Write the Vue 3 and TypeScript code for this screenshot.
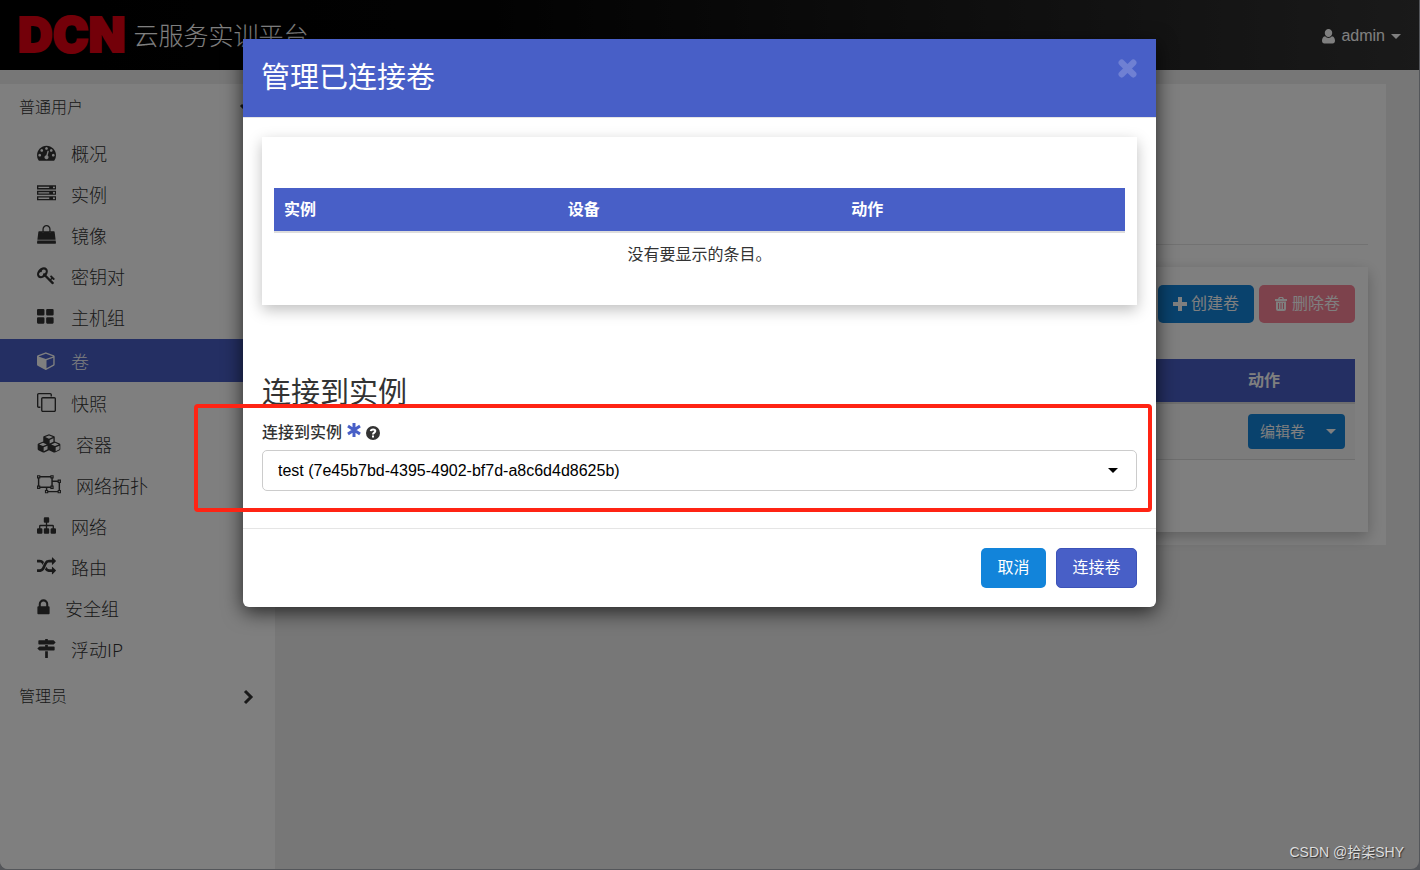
<script setup lang="ts">
import { ref } from 'vue'

interface NavItem {
  label: string
  width: number
  path: string
  active?: boolean
}

const navItems: NavItem[] = [
  {
    label: '概况',
    width: 1792,
    path: 'M384 1152q0-53-37.5-90.5t-90.5-37.5-90.5 37.5-37.5 90.5 37.5 90.5 90.5 37.5 90.5-37.5 37.5-90.5zm192-448q0-53-37.5-90.5t-90.5-37.5-90.5 37.5-37.5 90.5 37.5 90.5 90.5 37.5 90.5-37.5 37.5-90.5zm428 481l101-382q6-26-7.5-48.5t-38.5-29.5-48 6.5-30 39.5l-101 382q-60 5-107 43.5t-63 98.5q-20 77 20 146t117 89 146-20 89-117q16-60-6-117t-72-91zm660-33q0-53-37.5-90.5t-90.5-37.5-90.5 37.5-37.5 90.5 37.5 90.5 90.5 37.5 90.5-37.5 37.5-90.5zm-640-640q0-53-37.5-90.5t-90.5-37.5-90.5 37.5-37.5 90.5 37.5 90.5 90.5 37.5 90.5-37.5 37.5-90.5zm448 192q0-53-37.5-90.5t-90.5-37.5-90.5 37.5-37.5 90.5 37.5 90.5 90.5 37.5 90.5-37.5 37.5-90.5zm320 448q0 261-141 483-19 29-54 29h-1402q-35 0-54-29-141-221-141-483 0-182 71-348t191-286 286-191 348-71 348 71 286 191 191 286 71 348z',
  },
  {
    label: '实例',
    width: 1792,
    path: 'M128 1408h1024v-128h-1024v128zm0-512h1024v-128h-1024v128zm1568 448q0-40-28-68t-68-28-68 28-28 68 28 68 68 28 68-28 28-68zm-1568-960h1024v-128h-1024v128zm1568 448q0-40-28-68t-68-28-68 28-28 68 28 68 68 28 68-28 28-68zm0-512q0-40-28-68t-68-28-68 28-28 68 28 68 68 28 68-28 28-68zm96 832v384h-1792v-384h1792zm0-512v384h-1792v-384h1792zm0-512v384h-1792v-384h1792z',
  },
  {
    label: '镜像',
    width: 1792,
    path: 'M30 1472h1732l30 220q0 70-70 70H70q-70 0-70-70zM1664 660l92 720H36l92-720q6-56 64-64h320v100q0 60 60 60t60-60V596h528v100q0 60 60 60t60-60V596h320q58 8 64 64zM1280 384v300q0 60-60 60t-60-60V384q0-106-78-180t-186-75-186 75-78 180v300q0 60-60 60t-60-60V384q0-159 112-271T896 0t272 113 112 271z',
  },
  {
    label: '密钥对',
    width: 1792,
    path: 'M832 512q0-80-56-136t-136-56-136 56-56 136q0 42 19 83-41-19-83-19-80 0-136 56t-56 136 56 136 136 56 136-56 56-136q0-42-19-83 41 19 83 19 80 0 136-56t56-136zm851 704q0 17-49 66t-66 49q-9 0-28.5-16t-36.5-33-38.5-40-24.5-26l-96 96 220 220q28 28 28 68 0 42-39 81t-81 39q-40 0-68-28l-671-671q-176 131-365 131-163 0-265.5-102.5t-102.5-265.5q0-160 95-313t248-248 313-95q163 0 265.5 102.5t102.5 265.5q0 189-131 365l355 355 96-96q-3-3-26-24.5t-40-38.5-33-36.5-16-28.5q0-17 49-66t66-49q13 0 23 10 6 6 46 44.5t82 79.5 86.5 86 73 78 28.5 41z',
  },
  {
    label: '主机组',
    width: 1792,
    path: 'M96 192h512q96 0 96 96v416q0 96-96 96H96q-96 0-96-96V288q0-96 96-96zm864 0h512q96 0 96 96v416q0 96-96 96H960q-96 0-96-96V288q0-96 96-96zM96 960h512q96 0 96 96v416q0 96-96 96H96q-96 0-96-96v-416q0-96 96-96zm864 0h512q96 0 96 96v416q0 96-96 96H960q-96 0-96-96v-416q0-96 96-96z',
  },
  {
    label: '卷',
    width: 1792,
    active: true,
    path: 'M896 1629l640-349v-636l-640 233v752zm-64-865l698-254-698-254-698 254zm832-252v768q0 35-18 65t-49 47l-704 384q-28 16-61 16t-61-16l-704-384q-31-17-49-47t-18-65v-768q0-40 23-73t61-47l704-256q22-8 44-8t44 8l704 256q38 14 61 47t23 73z',
  },
  {
    label: '快照',
    width: 1792,
    path: 'M1664 1632v-1088q0-13-9.5-22.5t-22.5-9.5h-1088q-13 0-22.5 9.5t-9.5 22.5v1088q0 13 9.5 22.5t22.5 9.5h1088q13 0 22.5-9.5t9.5-22.5zm128-1088v1088q0 66-47 113t-113 47h-1088q-66 0-113-47t-47-113v-1088q0-66 47-113t113-47h1088q66 0 113 47t47 113zm-384-384v160h-128v-160q0-13-9.5-22.5t-22.5-9.5h-1088q-13 0-22.5 9.5t-9.5 22.5v1088q0 13 9.5 22.5t22.5 9.5h160v128h-160q-66 0-113-47t-47-113v-1088q0-66 47-113t113-47h1088q66 0 113 47t47 113z',
  },
  {
    label: '容器',
    width: 2304,
    path: 'M1152 0l500 200q52 26 52 90v420l470 190q66 30 66 100v430q0 70-66 104l-450 220q-60 30-120 0l-452-220-452 220q-60 30-120 0l-450-220q-66-34-66-104v-430q0-70 66-100l470-190V290q0-64 52-90zM1152 130L780 280l372 158 372-158zM1216 560v330l360-154V400zM576 824L204 982l372 158 372-158zM640 1260v370l370-182v-346zM1728 824l-372 158 372 158 372-158zM1792 1260v370l370-182v-346z',
  },
  {
    label: '网络拓扑',
    width: 2304,
    path: 'M0 0h320v320H0zM110 110v100h100V110zM1280 0h320v320h-320zM1390 110v100h100V110zM0 1000h320v320H0zM110 1110v100h100v-100zM1280 1000h320v320h-320zM1390 1110v100h100v-100zM320 85h960v140H320zM320 1085h960v140H320zM85 320h140v680H85zM1375 320h140v680h-140zM1980 420h320v320h-320zM2090 530v100h100V530zM1980 1420h320v320h-320zM2090 1530v100h100v-100zM760 1420h320v320H760zM870 1530v100h100v-100zM1515 510h465v140h-465zM2075 740h140v680h-140zM1080 1510h900v140h-900zM850 1225h140v195H850z',
  },
  {
    label: '网络',
    width: 1792,
    path: 'M736 128h320q96 0 96 96v320q0 96-96 96h-96v192h512q128 0 128 128v192h96q96 0 96 96v320q0 96-96 96h-320q-96 0-96-96v-320q0-96 96-96h96V960H960v192h96q96 0 96 96v320q0 96-96 96H736q-96 0-96-96v-320q0-96 96-96h96V960H320v192h96q96 0 96 96v320q0 96-96 96H96q-96 0-96-96v-320q0-96 96-96h96V960q0-128 128-128h512V640h-96q-96 0-96-96V224q0-96 96-96z',
  },
  {
    label: '路由',
    width: 1792,
    path: 'M666 481q-60 92-137 273-22-45-37-72.5t-40.5-63.5-51-56.5-63-35-81.5-14.5h-224q-14 0-23-9t-9-23v-192q0-14 9-23t23-9h224q250 0 410 225zm1126 799q0 14-9 23l-320 320q-9 9-23 9-13 0-22.5-9.5t-9.5-22.5v-192q-32 0-85 .5t-81 1-73-1-71-5-64-10.5-63-18.5-58-28.5-59-40-55-53.5-56-69.5q59-93 136-273 22 45 37 72.5t40.5 63.5 51 56.5 63 35 81.5 14.5h256v-192q0-14 9-23t23-9q12 0 24 10l319 319q9 9 9 23zm0-896q0 14-9 23l-320 320q-9 9-23 9-13 0-22.5-9.5t-9.5-22.5v-192h-256q-48 0-87 15t-69 45-51 61.5-45 77.5q-32 62-78 171-29 66-49.5 111t-54 105-64 100-74 83-90 68.5-106.5 42-128 16.5h-224q-14 0-23-9t-9-23v-192q0-14 9-23t23-9h224q48 0 87-15t69-45 51-61.5 45-77.5q32-62 78-171 29-66 49.5-111t54-105 64-100 74-83 90-68.5 106.5-42 128-16.5h256v-192q0-14 9-23t23-9q12 0 24 10l319 319q9 9 9 23z',
  },
  {
    label: '安全组',
    width: 1152,
    path: 'M320 768h512v-192q0-106-75-181t-181-75-181 75-75 181v192zm832 96v576q0 40-28 68t-68 28h-960q-40 0-68-28t-28-68v-576q0-40 28-68t68-28h32v-192q0-184 132-316t316-132 316 132 132 316v192h32q40 0 68 28t28 68z',
  },
  {
    label: '浮动IP',
    width: 1792,
    path: 'M800 0h192q32 0 32 32v96h512q32 0 54 22l150 148q20 22 0 44l-150 148q-22 22-54 22H192q-64 0-64-64V192q0-64 64-64h576V32q0-32 32-32zM768 576h256v128h576q64 0 64 64v256q0 64-64 64H256q-32 0-54-22L52 918q-20-22 0-44l150-148q22-22 54-22h512zM768 1152h256v608q0 32-32 32H800q-32 0-32-32z',
  },
]

const instance = ref('7e45b7bd-4395-4902-bf7d-a8c6d4d8625b')
</script>

<template>
  <div class="screen">
    <div class="page">
      <header class="topbar">
        <div class="brand"><span class="logo">DCN</span><span class="product">云服务实训平台</span></div>
        <button class="user" type="button">
          <svg class="user-icon" viewBox="0 0 14 16" aria-hidden="true">
            <path d="M7 0a4 4 0 0 1 4 4.200C11 6.500 9.300 8.500 7 8.500S3 6.500 3 4.200A4 4 0 0 1 7 0zM3.300 7.600Q4.800 9.500 7 9.500t3.700-1.900C13.200 8 14 10.500 14 12.600 14 14.200 13 15.500 11.400 15.500H2.600C1 15.500 0 14.200 0 12.600 0 10.500.800 8 3.300 7.600z" />
          </svg>
          <span>admin</span>
          <span class="caret"></span>
        </button>
      </header>

      <div class="columns">
        <nav class="sidebar">
          <button class="group" type="button">
            <span>普通用户</span>
            <svg class="chevron down" viewBox="0 0 16 16" aria-hidden="true"><path d="M2 5l6 6 6-6" /></svg>
          </button>
          <ul class="menu">
            <li v-for="item in navItems" :key="item.label">
              <a href="#" class="nav-link" :class="{ active: item.active }">
                <svg
                  class="nav-icon"
                  :class="{ wide: item.width > 1792, narrow: item.width < 1792 }"
                  :viewBox="`0 0 ${item.width} 1792`"
                  aria-hidden="true"
                >
                  <path :d="item.path" fill-rule="evenodd" />
                </svg>
                <span>{{ item.label }}</span>
              </a>
            </li>
          </ul>
          <button class="group" type="button">
            <span>管理员</span>
            <svg class="chevron" viewBox="0 0 12 16" aria-hidden="true"><path d="M2 2l6 6-6 6" /></svg>
          </button>
        </nav>

        <main class="content">
          <section class="panel">
            <div class="panel-head"></div>
            <div class="card volumes">
              <div class="toolbar">
                <button class="btn blue" type="button">
                  <svg viewBox="0 0 14 14" aria-hidden="true"><path d="M5 0h4v5h5v4H9v5H5V9H0V5h5z" /></svg>
                  创建卷
                </button>
                <button class="btn danger" type="button">
                  <svg viewBox="0 0 14 14" aria-hidden="true">
                    <path fill-rule="evenodd" d="M4 2l1-2h4l1 2h3v2H1V2zM5.500 2h3L8 1H6zM2 4.500h10V12q0 2-2 2H4q-2 0-2-2zM4 6v6h1V6zM6.500 6v6h1V6zM9 6v6h1V6z" />
                  </svg>
                  删除卷
                </button>
              </div>
              <table class="table">
                <thead>
                  <tr><th class="rest"></th><th class="actions">动作</th></tr>
                </thead>
                <tbody>
                  <tr class="striped">
                    <td></td>
                    <td>
                      <div class="split">
                        <button class="edit" type="button">编辑卷</button>
                        <button class="more" type="button" aria-label="更多"><span class="caret"></span></button>
                      </div>
                    </td>
                  </tr>
                </tbody>
              </table>
            </div>
          </section>
        </main>
      </div>
    </div>

    <div class="overlay">
      <div class="modal" role="dialog" aria-labelledby="modal-title">
        <div class="modal-header">
          <h3 id="modal-title">管理已连接卷</h3>
          <button class="close" type="button" aria-label="关闭">
            <svg viewBox="0 0 18 18" aria-hidden="true"><path d="M3.500 3.500l11 11M14.500 3.500l-11 11" /></svg>
          </button>
        </div>
        <div class="modal-body">
          <div class="card attachments">
            <table class="table">
              <thead>
                <tr><th>实例</th><th>设备</th><th>动作</th></tr>
              </thead>
              <tbody>
                <tr><td colspan="3" class="empty">没有要显示的条目。</td></tr>
              </tbody>
            </table>
          </div>
          <h3 class="section-title">连接到实例</h3>
          <div class="field">
            <div class="highlight"></div>
            <label for="instance">
              <span>连接到实例</span>
              <svg class="required" viewBox="0 0 14 14" aria-hidden="true">
                <path d="M7 0v14M1 3l12 8M13 3L1 11" />
              </svg>
              <svg class="help" viewBox="0 0 14 14" aria-hidden="true">
                <circle cx="7" cy="7" r="7" />
                <path d="M4.800 5.200C5 2.800 9.300 2.900 9.300 5.100 9.300 6.700 7 6.600 7 8.500M7 9.600v2" />
              </svg>
            </label>
            <div class="select-wrap">
              <select id="instance" v-model="instance">
                <option value="7e45b7bd-4395-4902-bf7d-a8c6d4d8625b">test (7e45b7bd-4395-4902-bf7d-a8c6d4d8625b)</option>
              </select>
              <span class="caret"></span>
            </div>
          </div>
        </div>
        <div class="modal-footer">
          <button class="btn cancel" type="button">取消</button>
          <button class="btn primary" type="button">连接卷</button>
        </div>
      </div>
    </div>
    <div class="watermark">CSDN @拾柒SHY</div>
  </div>
</template>

<style>
body {
  margin: 0;
  background: #777;
}
</style>

<style scoped>
* {
  box-sizing: border-box;
}
.screen {
  position: relative;
  min-height: 100vh;
  display: flex;
  overflow: hidden;
  padding: 0 1px 1px 0;
  background: #a8acb4;
  font-family: "Liberation Sans", "Noto Sans CJK SC", sans-serif;
  font-size: 16px;
  line-height: 24px;
  color: #333;
}
button,
select {
  font: inherit;
  color: inherit;
  border: 0;
  background: none;
  padding: 0;
  margin: 0;
}
svg {
  display: block;
  flex: none;
  fill: currentColor;
}
.caret {
  border: 5px solid transparent;
  border-top-color: currentColor;
  border-bottom: 0;
}
.page {
  flex: 1;
  display: flex;
  flex-direction: column;
  overflow: hidden;
  border-radius: 0 0 8px 8px;
  background: #efefef;
}
.topbar {
  height: 70px;
  flex: none;
  display: flex;
  align-items: center;
  justify-content: space-between;
  padding: 0 18px;
  background: linear-gradient(90deg, #000, #050505 35%, #343434);
  color: #fff;
}
.brand {
  display: flex;
  align-items: center;
  gap: 8px;
}
.logo {
  font-family: Inter, "Liberation Sans", sans-serif;
  font-size: 48px;
  line-height: 72px;
  font-weight: 900;
  color: #e60012;
  -webkit-text-stroke: 2px #e60012;
}
.product {
  font-size: 25px;
  line-height: 38px;
  font-weight: 300;
  padding-top: 2px;
}
.user {
  display: flex;
  align-items: center;
  gap: 6px;
  padding-top: 2px;
}
.user-icon {
  width: 13px;
  height: 15px;
}
.columns {
  flex: 1;
  display: flex;
  padding-top: 14px;
}
.sidebar {
  width: 275px;
  flex: none;
  background: #fff;
}
.group {
  width: 100%;
  height: 48px;
  display: flex;
  align-items: center;
  justify-content: space-between;
  padding: 0 20px 0 19px;
  font-weight: 300;
}
.chevron {
  width: 12px;
  height: 16px;
  fill: none;
  stroke: currentColor;
  stroke-width: 3;
}
.chevron.down {
  width: 16px;
}
.menu {
  list-style: none;
  margin: 0;
  padding: 0 0 4px;
}
.nav-link {
  height: 41px;
  display: flex;
  align-items: center;
  gap: 15px;
  padding: 0 37px;
  font-family: "Noto Sans CJK SC", sans-serif;
  font-size: 18px;
  font-weight: 300;
  color: #333;
  text-decoration: none;
}
.nav-link.active {
  height: 43px;
  margin-top: 2px;
  background: #485fc7;
  color: #fff;
}
.nav-icon {
  width: 19px;
  height: 19px;
}
.nav-icon.wide {
  width: 24px;
}
.nav-icon.narrow {
  width: 13px;
}
.content {
  flex: 1;
  padding-right: 33px;
}
.panel {
  background: #fff;
  padding: 0 18px 13px;
}
.panel-head {
  height: 161px;
  margin-bottom: 22px;
  border-bottom: 1px solid #e5e5e5;
}
.card {
  background: #fff;
  box-shadow: 0 5px 14px rgba(0, 0, 0, 0.25);
}
.volumes {
  height: 265px;
  padding: 18px 13px;
}
.toolbar {
  display: flex;
  justify-content: flex-end;
  gap: 5px;
  margin-bottom: 36px;
}
.btn {
  display: flex;
  align-items: center;
  justify-content: center;
  height: 40px;
  padding: 0 15px;
  border-radius: 5px;
  color: #fff;
}
.toolbar .btn {
  height: 38px;
  gap: 4px;
}
.toolbar svg {
  width: 14px;
  height: 14px;
}
.blue,
.cancel {
  background: #1284da;
}
.cancel {
  min-width: 65px;
}
.danger {
  background: #fa8499;
}
.primary {
  min-width: 81px;
  background: #485fc7;
  border: 1px solid #3c52b8;
}
.table {
  width: 100%;
  table-layout: fixed;
  border-collapse: separate;
  border-spacing: 0;
}
.table th {
  height: 45px;
  padding: 0 10px;
  text-align: left;
  font-weight: 700;
  color: #fff;
  background: #485fc7 padding-box;
  border-bottom: 2px solid #ddd;
}
.table .actions {
  width: 117px;
}
.striped td {
  height: 56px;
  padding: 0 10px;
  background: #f9f9f9;
  border-bottom: 1px solid #ddd;
}
.split {
  display: flex;
  height: 35px;
  border-radius: 4px;
  background: #1284da;
  color: #fff;
  font-size: 15px;
}
.edit {
  flex: 1;
}
.more {
  width: 28px;
  display: flex;
  align-items: center;
  justify-content: center;
}
.overlay {
  position: absolute;
  inset: 0;
  display: flex;
  align-items: flex-start;
  justify-content: center;
  padding: 39px 21px 39px 0;
  background: rgba(0, 0, 0, 0.5);
}
.modal {
  flex: 1;
  max-width: 913px;
  background: #fff;
  border-radius: 0 0 6px 6px;
  box-shadow: 0 5px 20px rgba(0, 0, 0, 0.7);
}
.modal-header {
  display: flex;
  justify-content: space-between;
  align-items: flex-start;
  height: 79px;
  padding: 19px 19px 19px 18px;
  background: #485fc7 padding-box;
  border-bottom: 1px solid #e5e5e5;
  color: #fff;
}
h3 {
  margin: 0;
  font-size: 29px;
  line-height: 40px;
  font-weight: 400;
}
.close {
  color: #6f80d3;
}
.close svg {
  width: 19px;
  height: 21px;
  stroke: currentColor;
  stroke-width: 6;
  stroke-linecap: round;
}
.modal-body {
  padding: 19px 19px 37px;
}
.attachments {
  padding: 51px 12px;
  height: 168px;
}
.empty {
  padding: 10px 0;
  text-align: center;
}
.section-title {
  margin-top: 68px;
}
.field {
  position: relative;
  margin-top: 8px;
}
.highlight {
  position: absolute;
  inset: -17px -15px -21px -68px;
  border: 4px solid #ff2414;
  border-radius: 4px;
  pointer-events: none;
}
label {
  display: flex;
  align-items: center;
  gap: 5px;
  font-weight: 500;
  margin-bottom: 5px;
}
.required {
  width: 14px;
  height: 20px;
  padding-bottom: 6px;
  stroke: #485fc7;
  stroke-width: 3;
}
.help {
  width: 14px;
  height: 14px;
}
.help path {
  fill: none;
  stroke: #fff;
  stroke-width: 2;
}
.select-wrap {
  display: flex;
  align-items: center;
}
select {
  flex: 1;
  height: 41px;
  padding: 0 15px;
  appearance: none;
  border: 1px solid #ccc;
  border-radius: 5px;
  background: #fff;
  color: #000;
}
.select-wrap .caret {
  margin-left: -29px;
  margin-right: 19px;
  color: #000;
  z-index: 1;
}
.modal-footer {
  display: flex;
  justify-content: flex-end;
  gap: 10px;
  padding: 19px;
  border-top: 1px solid #e5e5e5;
}
.watermark {
  position: absolute;
  right: 16px;
  bottom: 6px;
  font-size: 14px;
  color: #ddd;
  text-shadow: 1px 1px 1px #333;
}
</style>
